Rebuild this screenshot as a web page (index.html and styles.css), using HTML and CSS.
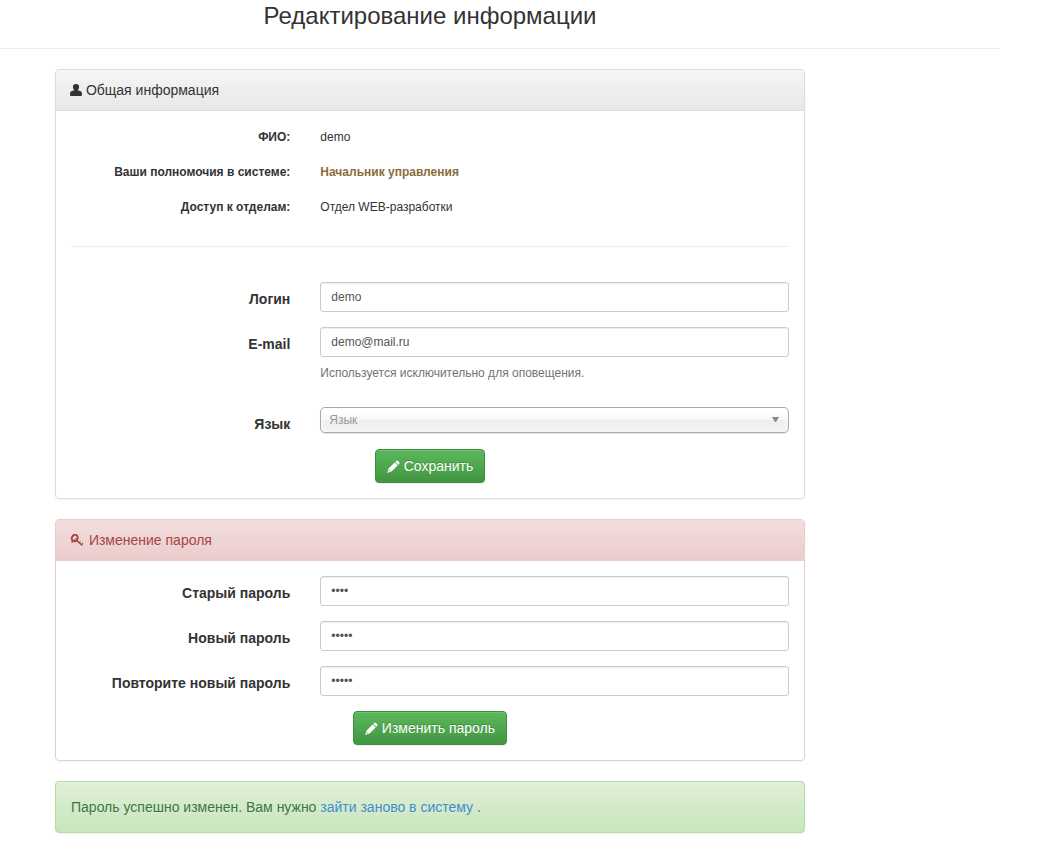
FILE: index.html
```html
<!DOCTYPE html>
<html lang="ru">
<head>
    <meta charset="UTF-8">
    <meta name="viewport" content="width=device-width, initial-scale=1.0">
    <title>Редактирование информации</title>
    <link rel="stylesheet" href="styles.css">
</head>
<body>

    <!-- Shared icons -->
    <svg class="icon-defs" width="0" height="0" aria-hidden="true">
        <symbol id="icon-pencil" viewBox="0 0 13 13">
            <path d="M9 1.2 Q10 .2 11 .9 L12.3 2.2 Q13 3.1 12.1 4 L11.4 4.7 L8.3 1.9 Z M7.7 2.5 L10.8 5.3 L4.9 11.2 L.2 12.9 L1.6 8.4 Z M2.1 9.9 L1.7 11.4 L3.2 10.9 Z" fill-rule="evenodd"/>
        </symbol>
    </svg>

    <main class="page">
        <h1 class="page-title">Редактирование информации</h1>
        <hr class="page-line">

        <div class="content">
            <section class="panel">
                <h2 class="panel-heading">
                    <svg class="icon icon-user" viewBox="0 0 12 12" aria-hidden="true">
                        <path d="M6 0 C8.2 0 9.2 1.3 9.1 3.1 C9 4.6 8.4 5.7 7.6 6.2 L10.3 7 Q11.7 7.6 11.9 9 V11 Q11.9 12 11 12 H1 Q.1 12 .1 11 V9 Q.3 7.6 1.7 7 L4.4 6.2 C3.6 5.7 3 4.6 2.9 3.1 C2.8 1.3 3.8 0 6 0 Z"/>
                    </svg>
                    Общая информация
                </h2>
                <form class="panel-body" onsubmit="return false">
                    <dl class="info">
                        <div class="form-group">
                            <dt>ФИО:</dt>
                            <dd>demo</dd>
                        </div>
                        <div class="form-group">
                            <dt>Ваши полномочия в системе:</dt>
                            <dd class="role">Начальник управления</dd>
                        </div>
                        <div class="form-group">
                            <dt>Доступ к отделам:</dt>
                            <dd>Отдел WEB-разработки</dd>
                        </div>
                    </dl>

                    <hr class="panel-line">

                    <div class="form-group">
                        <label for="login">Логин</label>
                        <input class="form-control" type="text" id="login" value="demo">
                    </div>
                    <div class="form-group">
                        <label for="email">E-mail</label>
                        <div>
                            <input class="form-control" type="email" id="email" value="demo@mail.ru" aria-describedby="emailHelp">
                            <p class="help-block" id="emailHelp">Используется исключительно для оповещения.</p>
                        </div>
                    </div>
                    <div class="form-group">
                        <label for="lang">Язык</label>
                        <div class="select-wrap">
                            <select class="select" id="lang">
                                <option value="">Язык</option>
                            </select>
                            <svg class="select-arrow" viewBox="0 0 7 5" aria-hidden="true"><path d="M0 0 H7 L4 5 H3 Z"/></svg>
                        </div>
                    </div>
                    <div class="form-actions">
                        <button class="btn" type="submit"><svg class="icon icon-pencil" aria-hidden="true"><use href="#icon-pencil"/></svg> Сохранить</button>
                    </div>
                </form>
            </section>

            <section class="panel panel-danger">
                <h2 class="panel-heading">
                    <svg class="icon icon-key" viewBox="0 0 15 13" aria-hidden="true">
                        <ellipse cx="4.7" cy="4" rx="2.8" ry="3.4" transform="rotate(25 4.7 4)"/>
                        <path class="shaft" d="M6.6 6.3 L12.4 11.4"/>
                        <path class="thin" d="M9.4 8.4 L10.6 7.2 M11.6 10.3 L13.2 8.8 M1 8 L3 8 L5.4 4.6"/>
                    </svg>
                    Изменение пароля
                </h2>
                <form class="panel-body" onsubmit="return false">
                    <div class="form-group">
                        <label for="oldPassword">Старый пароль</label>
                        <input class="form-control" type="password" id="oldPassword" value="demo">
                    </div>
                    <div class="form-group">
                        <label for="newPassword">Новый пароль</label>
                        <input class="form-control" type="password" id="newPassword" value="demo1">
                    </div>
                    <div class="form-group">
                        <label for="repeatPassword">Повторите новый пароль</label>
                        <input class="form-control" type="password" id="repeatPassword" value="demo1">
                    </div>
                    <div class="form-actions">
                        <button class="btn" type="submit"><svg class="icon icon-pencil" aria-hidden="true"><use href="#icon-pencil"/></svg> Изменить пароль</button>
                    </div>
                </form>
            </section>

            <div class="alert" role="status">
                Пароль успешно изменен. Вам нужно <a href="#">зайти заново в систему</a> .
            </div>
        </div>
    </main>

</body>
</html>
```
FILE: styles.css
```css
* {
    box-sizing: border-box;
}
body {
    margin: 0;
    background-color: #fff;
    color: #333;
    font-family: "Liberation Sans", Arial, sans-serif;
    font-size: 14px;
    line-height: 20px;
}
.icon-defs {
    position: absolute;
}
.page {
    max-width: 1000px;
    padding-top: 3px;
}
.page-title,
.content {
    max-width: 860px;
    padding: 0 55px;
}
.page-title {
    margin: 0;
    font-size: 24px;
    font-weight: normal;
    line-height: 26px;
    text-align: center;
}
hr {
    border: 0;
    border-top: 1px solid #eee;
}
.page-line {
    margin: 19px 0 20px;
}

/* Panels */
.panel {
    margin-bottom: 20px;
    border: 1px solid #ddd;
    border-radius: 4px;
    box-shadow: 0 1px 2px rgba(0, 0, 0, 0.05);
}
.panel-heading {
    margin: 0;
    padding: 10px 14px;
    border-bottom: 1px solid #ddd;
    border-radius: 3px 3px 0 0;
    background-image: linear-gradient(#f5f5f5, #e8e8e8);
    font-size: 14px;
    font-weight: normal;
}
.panel-danger {
    border-color: #ebccd1;
}
.panel-danger .panel-heading {
    border-color: #ebccd1;
    background-image: linear-gradient(#f2dede, #ebcccc);
    color: #a94442;
}
.panel-body {
    padding: 15px;
}
.panel-line {
    margin: 29px 0 35px;
}

/* Icons */
.icon {
    vertical-align: -2px;
    fill: currentColor;
}
.icon-user {
    width: 12px;
    height: 12px;
    vertical-align: -1px;
}
.icon-pencil {
    width: 13px;
    height: 13px;
}
.icon-key {
    width: 15px;
    height: 13px;
    fill: none;
    stroke: currentColor;
    stroke-width: 2;
}
.icon-key .shaft {
    stroke-width: 1.6;
}
.icon-key .thin {
    stroke-width: 1;
}

/* Form rows: label takes one third, field takes the rest */
.form-group {
    display: grid;
    grid-template-columns: 1fr 2fr;
    margin: 0 -15px 15px;
}
.form-group > * {
    min-width: 0;
    margin: 0 15px;
}
.form-group label {
    padding-top: 7px;
    font-weight: bold;
    text-align: right;
}
.info {
    margin: 0;
    padding-top: 1px;
    font-size: 12px;
}
.info dt {
    font-weight: bold;
    text-align: right;
}
.info .role {
    color: #8a6d3b;
    font-weight: bold;
}
.form-control {
    height: 30px;
    padding: 5px 10px;
    border: 1px solid #ccc;
    border-radius: 3px;
    background-color: #fff;
    box-shadow: inset 0 1px 1px rgba(0, 0, 0, 0.075);
    color: #555;
    font-family: inherit;
    font-size: 12px;
    line-height: 18px;
}
div > .form-control {
    display: block;
}
.form-group div .form-control {
    width: 100%;
}
.form-control:focus {
    border-color: #66afe9;
    outline: none;
}
.help-block {
    margin: 6px 0 9px;
    color: #737373;
    font-size: 12px;
}
.select-wrap {
    position: relative;
}
.select {
    display: block;
    width: 100%;
    height: 26px;
    padding: 0 26px 0 8px;
    border: 1px solid #aaa;
    border-radius: 5px;
    appearance: none;
    background: linear-gradient(#fff 20%, #f6f6f6 50%, #eee 52%, #f4f4f4 100%);
    box-shadow: inset 0 0 3px #fff, 0 1px 1px rgba(0, 0, 0, 0.1);
    color: #999;
    font-family: inherit;
    font-size: 12px;
}
.select-arrow {
    position: absolute;
    top: 10px;
    right: 10px;
    width: 7px;
    height: 5px;
    fill: #888;
    pointer-events: none;
}
.form-actions {
    text-align: center;
}
.btn {
    display: block;
    margin: 0 auto;
    padding: 6px 11px;
    border: 1px solid #3e8f3e;
    border-radius: 4px;
    background-image: linear-gradient(#5cb85c, #419641);
    box-shadow: inset 0 1px 0 rgba(255, 255, 255, 0.15), 0 1px 1px rgba(0, 0, 0, 0.075);
    color: #fff;
    cursor: pointer;
    font-family: inherit;
    font-size: 14px;
    line-height: 20px;
    text-shadow: 0 -1px 0 rgba(0, 0, 0, 0.2);
}
.btn:hover {
    background-image: none;
    background-color: #419641;
}

/* Result message */
.alert {
    margin-bottom: 20px;
    padding: 15px;
    border: 1px solid #b2dba1;
    border-radius: 4px;
    background-image: linear-gradient(#dff0d8, #c8e5bc);
    box-shadow: inset 0 1px 0 rgba(255, 255, 255, 0.25), 0 1px 2px rgba(0, 0, 0, 0.05);
    color: #3c763d;
    text-shadow: 0 1px 0 rgba(255, 255, 255, 0.2);
}
.alert a {
    color: #428bca;
    text-decoration: none;
}
.alert a:hover {
    text-decoration: underline;
}
```
